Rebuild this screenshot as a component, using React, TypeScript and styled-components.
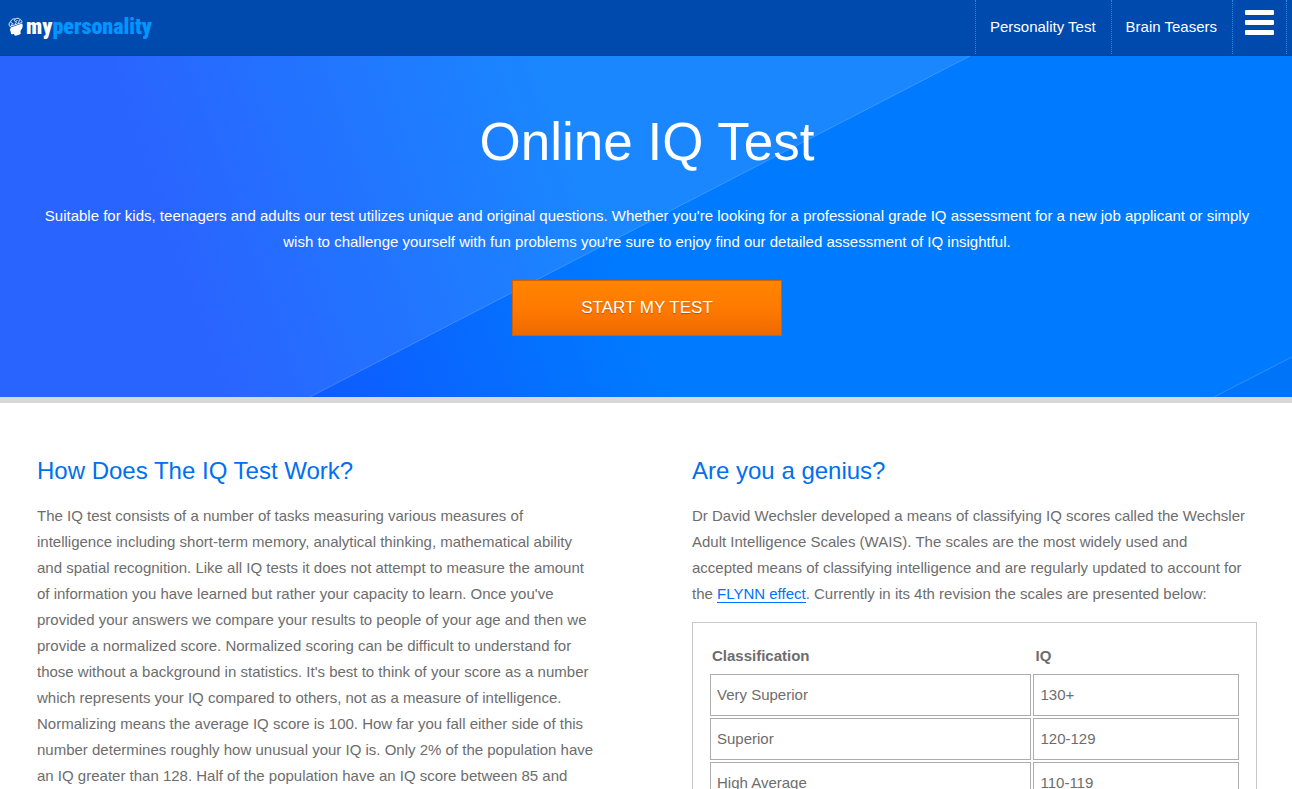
import React from "react";
import styled, { createGlobalStyle } from "styled-components";

const GlobalStyle = createGlobalStyle`
  *, *::before, *::after { box-sizing: border-box; }
  body {
    margin: 0;
    background: #fff;
    color: #6d6d6d;
    font-family: "Liberation Sans", Arial, sans-serif;
    font-size: 15px;
    line-height: 26px;
  }
`;

const Page = styled.div`
  height: 100vh;
  overflow: hidden auto;
  scrollbar-width: none;
`;

const Header = styled.header`
  display: flex;
  justify-content: space-between;
  height: 56px;
  padding: 0 5px 0 8px;
  background: #0049ad;
  border-bottom: 1px solid #0045a0;
`;

const Logo = styled.a`
  display: flex;
  align-items: center;
  align-self: flex-start;
  gap: 2px;
  height: 54px;
  color: #fff;
  font-family: "Roboto Condensed", "Open Sans Condensed", Roboto, sans-serif;
  font-size: 22px;
  font-weight: 900;
  text-decoration: none;
`;

const LogoAccent = styled.span`
  color: #0096ff;
`;

const Nav = styled.nav`
  display: flex;
  height: 54px;
  border-right: 1px dotted #1e8ae8;
`;

const NavLink = styled.a`
  padding: 14px 15px 14px 14px;
  border-left: 1px dotted #1e8ae8;
  color: #fff;
  text-decoration: none;
  white-space: nowrap;
`;

const MenuButton = styled.button`
  display: flex;
  flex-direction: column;
  gap: 5px;
  padding: 10px 12px 0;
  border: 0;
  border-left: 1px dotted #1e8ae8;
  background: none;
`;

const MenuBar = styled.span`
  width: 29px;
  height: 5px;
  border-radius: 1px;
  background: #fff;
`;

const Hero = styled.section`
  position: relative;
  padding: 56px 35px 61px 37px;
  border-bottom: 6px solid #d8d8d8;
  background: linear-gradient(71deg, #1253ff 16%, #007aff 47%);
  color: #fff;
  text-align: center;
`;

const HeroShapes = styled.svg`
  position: absolute;
  inset: 0;
  width: 100%;
  height: 100%;
`;

const HeroContent = styled.div`
  position: relative;
  display: flex;
  flex-direction: column;
  align-items: center;
`;

const Title = styled.h1`
  margin: 0 0 31px;
  font-size: 53px;
  font-weight: 300;
  line-height: 60px;
`;

const Lead = styled.p`
  margin: 0 0 25px;
`;

const StartButton = styled.button`
  width: 270px;
  height: 56px;
  border: 1px solid #d65f00;
  background: linear-gradient(#ff8500, #ff7a00 50%, #ee6a00);
  color: #fff;
  font-family: inherit;
  font-size: 17px;
  text-shadow: 0 1px 1px rgba(0, 0, 0, 0.3);
`;

const Columns = styled.main`
  display: grid;
  grid-template-columns: 1fr 1fr;
  gap: 90px;
  padding: 52px 35px 52px 37px;
`;

const Heading = styled.h2`
  margin: 0 0 16px;
  color: #0070f0;
  font-size: 24px;
  font-weight: 400;
  line-height: 32px;
`;

const Text = styled.p`
  margin: 0 0 15px;
  padding-right: 7px;
`;

const TextLink = styled.a`
  border-bottom: 1px solid #0070ff;
  color: #0070ff;
  text-decoration: none;
`;

const ScoreTable = styled.table`
  width: 100%;
  padding: 15px;
  border: 1px solid #c8c8c8;
  border-collapse: separate;
  border-spacing: 2px;
`;

const HeadCell = styled.th<{ $wide?: boolean }>`
  width: ${(p) => (p.$wide ? "61%" : "39%")};
  padding: 3px 2px;
  text-align: left;
`;

const Cell = styled.td`
  padding: 7px 6px;
  border: 1px solid #acacac;
`;

const scores = [
  ["Very Superior", "130+"],
  ["Superior", "120-129"],
  ["High Average", "110-119"],
  ["Average", "90-109"],
];

const HeadIcon = () => (
  <svg width="16" height="20" viewBox="0 0 16 20" aria-hidden="true">
    <path
      d="M2.500 10.500 14.200 6.500c1 2.500.4 4.700-1 6.300-1 1.200-.9 2.300-.3 3.700-1.800 1.500-4 2.200-6.200 2.200-.2-1.300-.8-1.800-1.900-1.500-1.300.3-1.900-.2-1.900-1.400l-.2-1.200-.6-.5.300-.8-.7-.6.9-1.300z"
      fill="#fff"
    />
    <g fill="none" stroke="#fff" strokeWidth="0.900">
      <path d="M1.900 9.500C.5 7.800 1 5.500 2.700 4.600 3.200 2.500 5.400 1.500 7.200 2 9 .7 11.600 1.200 12.400 2.800c1.300.4 1.800 1.600 1.500 2.700z" />
      <path d="M3 4.800c-.1 1.300.9 1.800 1.800 1.400M3.500 8.700c-.2-1.300.8-2 1.900-1.700M7.300 2.200C6 3.200 6.500 4.400 7.600 4.600M7.600 4.600c1-.1 1.600-.8 1.400-1.600M7.500 7.300c-.4-1 .1-1.800 1.100-1.900M12.200 3c-1.100.1-1.500.9-1 1.700M11.200 4.700c-.8.2-1 .8-.7 1.500" />
    </g>
  </svg>
);

export default function App() {
  return (
    <>
      <GlobalStyle />
      <Page>
        <Header>
          <Logo href="#" aria-label="mypersonality">
            <HeadIcon />
            <span>
              my<LogoAccent>personality</LogoAccent>
            </span>
          </Logo>
          <Nav>
            <NavLink href="#">Personality Test</NavLink>
            <NavLink href="#">Brain Teasers</NavLink>
            <MenuButton aria-label="Menu">
              <MenuBar />
              <MenuBar />
              <MenuBar />
            </MenuButton>
          </Nav>
        </Header>

        <Hero>
          <HeroShapes viewBox="0 0 1292 341" preserveAspectRatio="none" aria-hidden="true">
            <path d="M0 0H970L310 341H0Z" fill="#fff" fillOpacity="0.1" />
            <path d="M1292 301V341H1214Z" fill="#004bd0" fillOpacity="0.12" />
            <path d="M970 0 310 341M1292 301 1214 341" stroke="#fff" strokeOpacity="0.18" />
          </HeroShapes>
          <HeroContent>
            <Title>Online IQ Test</Title>
            <Lead>
              Suitable for kids, teenagers and adults our test utilizes unique and original
              questions. Whether you're looking for a professional grade IQ assessment for a new
              job applicant or simply wish to challenge yourself with fun problems you're sure to
              enjoy find our detailed assessment of IQ insightful.
            </Lead>
            <StartButton>START MY TEST</StartButton>
          </HeroContent>
        </Hero>

        <Columns>
          <section>
            <Heading>How Does The IQ Test Work?</Heading>
            <Text>
              The IQ test consists of a number of tasks measuring various measures of intelligence
              including short-term memory, analytical thinking, mathematical ability and spatial
              recognition. Like all IQ tests it does not attempt to measure the amount of
              information you have learned but rather your capacity to learn. Once you've provided
              your answers we compare your results to people of your age and then we provide a
              normalized score. Normalized scoring can be difficult to understand for those
              without a background in statistics. It's best to think of your score as a number
              which represents your IQ compared to others, not as a measure of intelligence.
              Normalizing means the average IQ score is 100. How far you fall either side of this
              number determines roughly how unusual your IQ is. Only 2% of the population have an
              IQ greater than 128. Half of the population have an IQ score between 85 and
            </Text>
          </section>
          <section>
            <Heading>Are you a genius?</Heading>
            <Text>
              Dr David Wechsler developed a means of classifying IQ scores called the Wechsler
              Adult Intelligence Scales (WAIS). The scales are the most widely used and accepted
              means of classifying intelligence and are regularly updated to account for the{" "}
              <TextLink href="#">FLYNN effect</TextLink>. Currently in its 4th revision the scales
              are presented below:
            </Text>
            <ScoreTable>
              <thead>
                <tr>
                  <HeadCell $wide>Classification</HeadCell>
                  <HeadCell>IQ</HeadCell>
                </tr>
              </thead>
              <tbody>
                {scores.map(([label, range]) => (
                  <tr key={label}>
                    <Cell>{label}</Cell>
                    <Cell>{range}</Cell>
                  </tr>
                ))}
              </tbody>
            </ScoreTable>
          </section>
        </Columns>
      </Page>
    </>
  );
}
